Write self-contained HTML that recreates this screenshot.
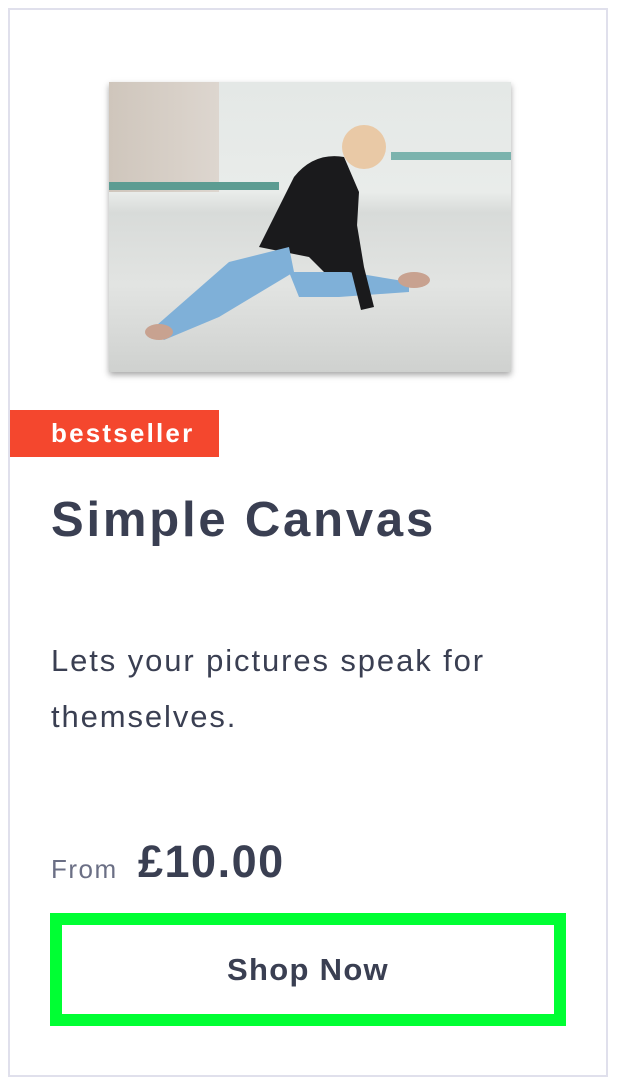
<!DOCTYPE html>
<html><head><style>
body{margin:0;width:618px;height:1084px;background:#fff;font-family:"Liberation Sans",sans-serif;overflow:hidden}
.card{position:absolute;left:8px;top:8px;width:596px;height:1065px;border:2px solid #e0e0ec}
.img{position:absolute;left:109px;top:82px;width:402px;height:290px;box-shadow:0 3px 6px rgba(0,0,0,.35);overflow:hidden;
background:linear-gradient(180deg,#e4e8e6 0%,#e9ecea 38%,#d8dbd9 45%,#e2e4e2 70%,#cfd1cf 100%)}
.wall{position:absolute;left:0;top:0;width:110px;height:110px;background:linear-gradient(90deg,#cfc6bc,#ddd6cf)}
.stripe{position:absolute;left:0;top:100px;width:170px;height:8px;background:#5c9c92}
.stripe2{position:absolute;right:0;top:70px;width:120px;height:8px;background:#7bb3ad}
.badge{position:absolute;left:10px;top:410px;width:209px;height:47px;background:#f4472e;color:#fff;font-weight:bold;font-size:26px;letter-spacing:2.2px;line-height:46px;box-sizing:border-box;padding-left:41px}
h1{position:absolute;left:51px;top:492px;margin:0;font-size:49px;color:#3a3f52;font-weight:bold;letter-spacing:2.8px}
.desc{position:absolute;left:51px;top:633px;width:540px;font-size:31px;letter-spacing:1.9px;line-height:56px;color:#3a3f52}
.from{position:absolute;left:51px;top:854px;font-size:26px;letter-spacing:1.5px;color:#6b6f85}
.price{position:absolute;left:138px;top:836px;font-size:45px;letter-spacing:1.5px;font-weight:bold;color:#3a3f52}
.btn{position:absolute;left:50px;top:913px;width:516px;height:113px;box-sizing:border-box;border:12px solid #00ff33;text-align:center;line-height:89px;font-size:31px;letter-spacing:1.3px;font-weight:bold;color:#3a3f52}
</style></head><body>
<div class="card"></div>
<div class="img">
<div class="wall"></div><div class="stripe"></div><div class="stripe2"></div>
<svg width="402" height="290" style="position:absolute;left:0;top:0">
<path d="M150 165 L185 95 Q205 70 235 75 L250 110 L245 195 L225 200 L200 175 Z" fill="#1a1a1c"/>
<circle cx="255" cy="65" r="22" fill="#e9c9a6"/>
<path d="M40 250 L120 180 L180 165 L185 190 L110 235 L55 258 Z" fill="#7fb0d8"/>
<path d="M180 190 L240 190 L300 200 L300 210 L230 215 L190 215 Z" fill="#7fb0d8"/>
<path d="M240 95 L255 185 L265 225 L252 228 L235 160 Z" fill="#1a1a1c"/>
<ellipse cx="50" cy="250" rx="14" ry="8" fill="#c8a290"/>
<ellipse cx="305" cy="198" rx="16" ry="8" fill="#c8a290"/>
</svg>
</div>
<div class="badge">bestseller</div>
<h1>Simple Canvas</h1>
<div class="desc">Lets your pictures speak for themselves.</div>
<div class="from">From</div>
<div class="price">£10.00</div>
<div class="btn">Shop Now</div>
</body></html>
